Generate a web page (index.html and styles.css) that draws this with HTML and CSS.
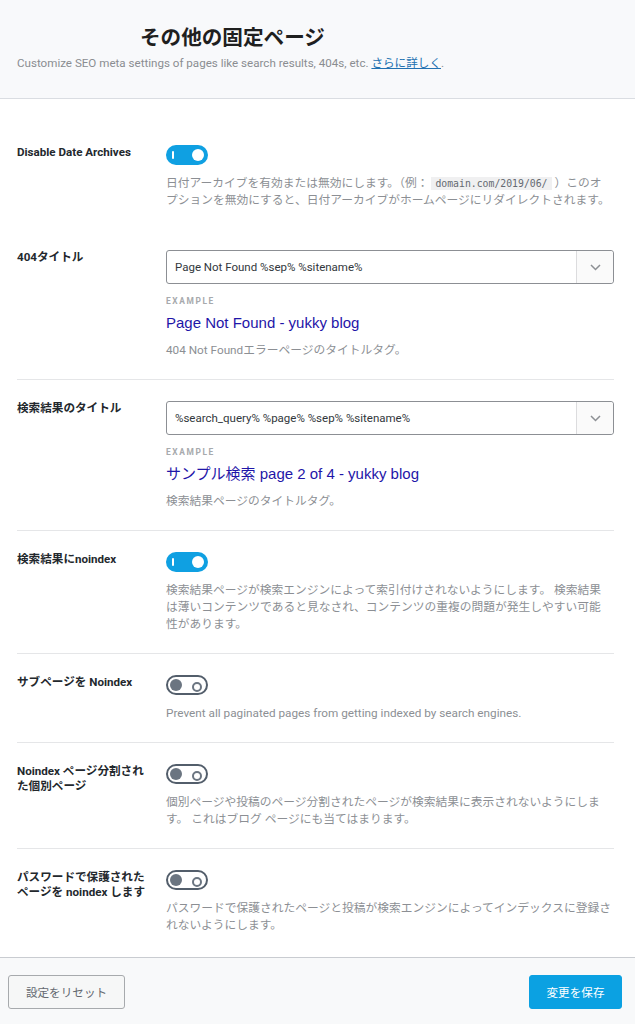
FILE: index.html
```html
<!DOCTYPE html>
<html lang="ja">
<head>
<meta charset="utf-8">
<title>その他の固定ページ</title>
<link rel="stylesheet" href="styles.css">
</head>
<body>
<div class="page">
  <header class="head">
    <h1 class="title">その他の固定ページ</h1>
    <p class="sub">Customize SEO meta settings of pages like search results, 404s, etc. <a href="#">さらに詳しく</a>.</p>
  </header>

  <main class="content">
    <div class="row plain">
      <div class="label">Disable Date Archives</div>
      <div class="field">
        <span class="toggle on"></span>
        <p class="desc">日付アーカイブを有効または無効にします。（例： <code>domain.com/2019/06/</code> ）このオ<br>プションを無効にすると、日付アーカイブがホームページにリダイレクトされます。</p>
      </div>
    </div>

    <div class="row">
      <div class="label">404タイトル</div>
      <div class="field">
        <div class="select">
          <span class="select-text">Page Not Found %sep% %sitename%</span>
          <span class="select-btn"><svg width="11" height="7" viewBox="0 0 11 7"><path d="M1 1l4.5 4.5L10 1" fill="none" stroke="#8c8f94" stroke-width="1.5"/></svg></span>
        </div>
        <div class="example">EXAMPLE</div>
        <div class="serp">Page Not Found - yukky blog</div>
        <p class="desc">404 Not Foundエラーページのタイトルタグ。</p>
      </div>
    </div>

    <div class="row">
      <div class="label">検索結果のタイトル</div>
      <div class="field">
        <div class="select">
          <span class="select-text">%search_query% %page% %sep% %sitename%</span>
          <span class="select-btn"><svg width="11" height="7" viewBox="0 0 11 7"><path d="M1 1l4.5 4.5L10 1" fill="none" stroke="#8c8f94" stroke-width="1.5"/></svg></span>
        </div>
        <div class="example">EXAMPLE</div>
        <div class="serp">サンプル検索 page 2 of 4 - yukky blog</div>
        <p class="desc">検索結果ページのタイトルタグ。</p>
      </div>
    </div>

    <div class="row">
      <div class="label">検索結果にnoindex</div>
      <div class="field">
        <span class="toggle on"></span>
        <p class="desc">検索結果ページが検索エンジンによって索引付けされないようにします。 検索結果<br>は薄いコンテンツであると見なされ、コンテンツの重複の問題が発生しやすい可能<br>性があります。</p>
      </div>
    </div>

    <div class="row">
      <div class="label">サブページを Noindex</div>
      <div class="field">
        <span class="toggle off"></span>
        <p class="desc">Prevent all paginated pages from getting indexed by search engines.</p>
      </div>
    </div>

    <div class="row">
      <div class="label">Noindex ページ分割された個別ページ</div>
      <div class="field">
        <span class="toggle off"></span>
        <p class="desc">個別ページや投稿のページ分割されたページが検索結果に表示されないようにします。 これはブログ ページにも当てはまります。</p>
      </div>
    </div>

    <div class="row plain">
      <div class="label">パスワードで保護されたページを noindex します</div>
      <div class="field">
        <span class="toggle off"></span>
        <p class="desc">パスワードで保護されたページと投稿が検索エンジンによってインデックスに登録されないようにします。</p>
      </div>
    </div>
  </main>

  <footer class="foot">
    <button class="btn reset" type="button">設定をリセット</button>
    <button class="btn save" type="button">変更を保存</button>
  </footer>
</div>
</body>
</html>
```

FILE: styles.css
```css
* { box-sizing: border-box; }

html, body {
  margin: 0;
  padding: 0;
}

body {
  font-family: Roboto, "Noto Sans CJK JP", sans-serif;
  color: #23282d;
  background: #ffffff;
}

.page {
  min-height: 1024px;
  display: flex;
  flex-direction: column;
}

/* header */
.head {
  background: #f8f9fb;
  border-bottom: 1px solid #dadde2;
  padding: 24px 17px 25px;
  height: 99px;
}

.title {
  margin: 0 0 0 123px;
  font-size: 20.6px;
  line-height: 28px;
  font-weight: 700;
  color: #1f1f1f;
}

.sub {
  margin: 3px 0 0;
  font-size: 11.6px;
  line-height: 17px;
  color: #8a8d91;
}

.sub a {
  color: #2271b1;
  text-decoration: underline;
}

/* content */
.content {
  padding: 25px 21px 2px 17px;
  flex: 1;
}

.row {
  display: grid;
  grid-template-columns: 132px 1fr;
  column-gap: 17px;
  padding: 21px 0 20px;
  border-bottom: 1px solid #e5e6e8;
}

.row.plain {
  border-bottom: none;
}

.label {
  font-size: 11.6px;
  line-height: 15px;
  font-weight: 700;
  color: #23282d;
}

.field {
  min-width: 0;
}

.desc {
  margin: 0;
  font-size: 11.75px;
  line-height: 17px;
  color: #8c8f94;
}

.desc code {
  font-family: "DejaVu Sans Mono", "Liberation Mono", monospace;
  font-size: 9.8px;
  line-height: 12px;
  background: #f0f0f1;
  color: #646970;
  padding: 1px 4px;
}

/* toggles */
.toggle {
  display: block;
  position: relative;
  width: 42px;
  height: 20px;
  border-radius: 10px;
  margin-bottom: 10px;
}

.toggle.on {
  background: #0fa0e2;
}

.toggle.on::before {
  content: "";
  position: absolute;
  left: 6px;
  top: 6px;
  width: 2px;
  height: 8px;
  background: #ffffff;
  border-radius: 1px;
}

.toggle.on::after {
  content: "";
  position: absolute;
  right: 4px;
  top: 4px;
  width: 12px;
  height: 12px;
  border-radius: 50%;
  background: #ffffff;
}

.toggle.off {
  background: #ffffff;
  border: 2px solid #535e6b;
}

.toggle.off::before {
  content: "";
  position: absolute;
  left: 2px;
  top: 2px;
  width: 12px;
  height: 12px;
  border-radius: 50%;
  background: #6b7581;
}

.toggle.off::after {
  content: "";
  position: absolute;
  right: 4px;
  top: 5px;
  width: 6px;
  height: 6px;
  border-radius: 50%;
  border: 2px solid #6b7581;
}

/* select-like input */
.select {
  display: flex;
  height: 34px;
  border: 1px solid #8c8f94;
  border-radius: 3px;
  background: #ffffff;
}

.select-text {
  flex: 1;
  padding-left: 8px;
  font-size: 11.5px;
  line-height: 32px;
  color: #32373c;
  white-space: nowrap;
}

.select-btn {
  width: 37px;
  border-left: 1px solid #dcdcde;
  background: #fafafa;
  border-radius: 0 3px 3px 0;
  display: flex;
  align-items: center;
  justify-content: center;
}

.example {
  margin-top: 12px;
  font-size: 8.4px;
  line-height: 10px;
  font-weight: 700;
  letter-spacing: 1.6px;
  color: #a7aaad;
}

.serp {
  margin-top: 6px;
  font-family: "Liberation Sans", Arial, "Noto Sans CJK JP", sans-serif;
  font-size: 15px;
  line-height: 22px;
  color: #1f16a8;
}

.serp + .desc {
  margin-top: 8px;
}

/* footer */
.foot {
  background: #f8f9fa;
  border-top: 1px solid #c9ccd1;
  padding: 17px 13px 15px 8px;
  display: flex;
  justify-content: space-between;
  align-items: flex-start;
}

.btn {
  font-family: Roboto, "Noto Sans CJK JP", sans-serif;
  font-size: 11.6px;
  height: 34px;
  border-radius: 3px;
  padding: 0;
  white-space: nowrap;
  cursor: pointer;
}

.btn.reset {
  width: 117px;
  background: #f6f7f7;
  border: 1px solid #a7aaad;
  color: #646970;
}

.btn.save {
  width: 93px;
  background: #0ba1e2;
  border: 1px solid #0ba1e2;
  color: #ffffff;
}
```
